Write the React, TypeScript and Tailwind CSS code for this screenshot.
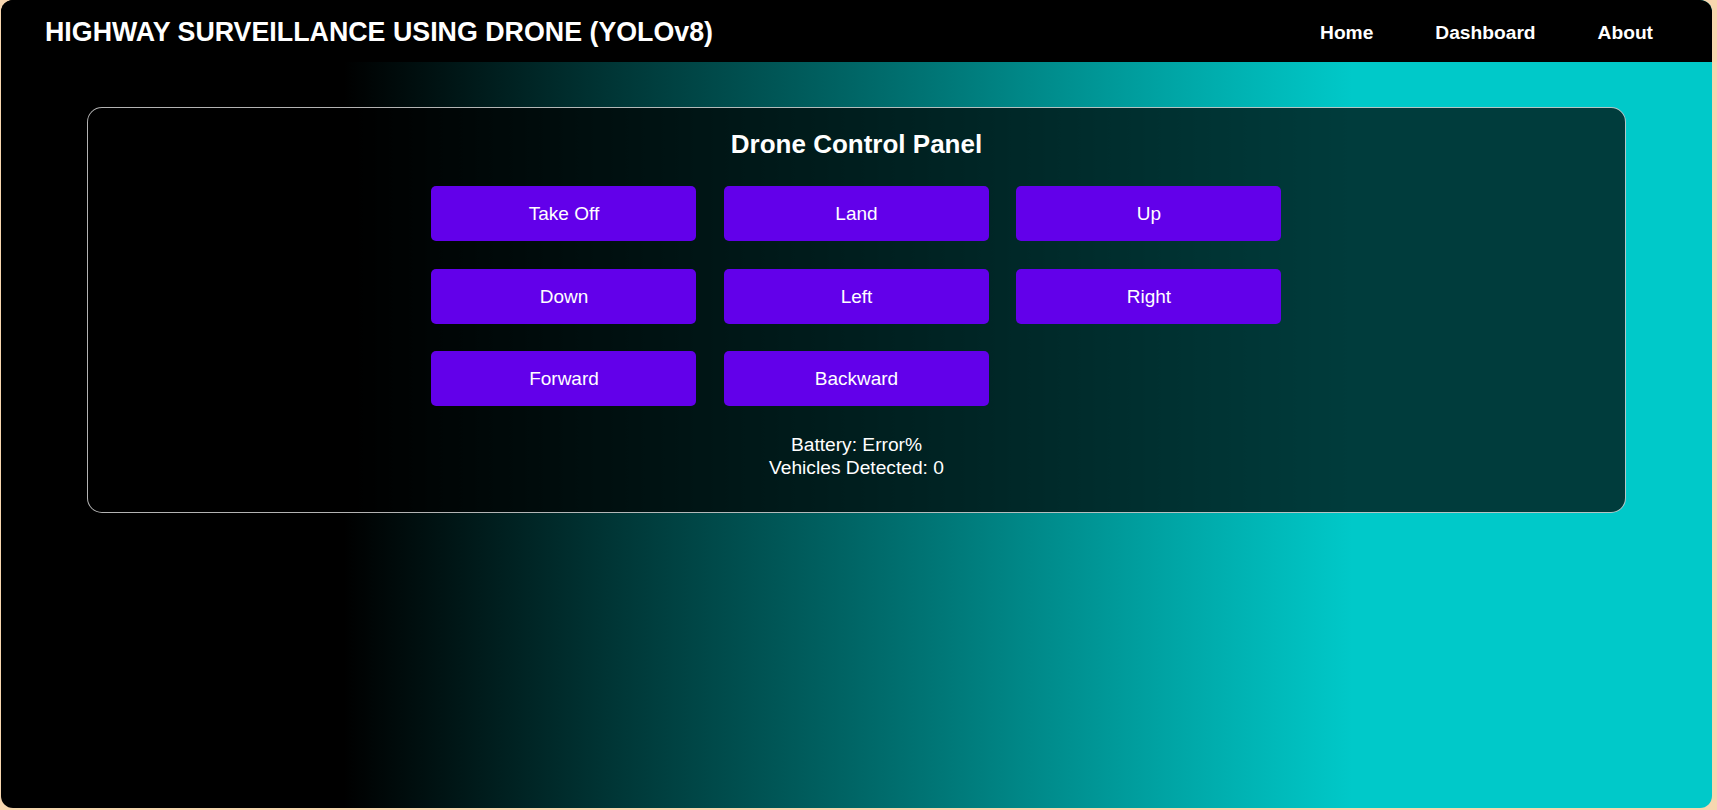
import React from "react";

const buttons = ["Take Off", "Land", "Up", "Down", "Left", "Right", "Forward", "Backward"];

export default function App() {
  return (
    <div className="w-full h-[810px] bg-[#f7d6af] overflow-hidden" style={{ fontFamily: '"Liberation Sans", Arial, sans-serif' }}>
      <div className="ml-[1px] mr-[5px] h-[808px] rounded-[12px] overflow-hidden flex flex-col bg-[linear-gradient(to_right,#000_20%,#00c9c9_79%)]">
        <header className="h-[62px] bg-black flex items-center justify-between pl-[44px] pr-[59px] shrink-0">
          <h1 className="text-[26.8px] font-bold text-white leading-none pt-[2px]">HIGHWAY SURVEILLANCE USING DRONE (YOLOv8)</h1>
          <nav className="flex gap-[62px] pt-[5px]">
            <a className="text-[19.2px] font-bold text-white">Home</a>
            <a className="text-[19.2px] font-bold text-white">Dashboard</a>
            <a className="text-[19.2px] font-bold text-white">About</a>
          </nav>
        </header>
        <section className="mt-[45px] mx-auto w-[90%] rounded-[15px] border border-white/70 bg-black/70 pt-[22px] pb-[33px] flex flex-col items-center">
          <h2 className="text-[26px] font-bold text-white leading-[29px]">Drone Control Panel</h2>
          <div className="mt-[27px] grid grid-cols-[265px_265px_265px] gap-x-[27.5px] gap-y-[27.5px]">
            {buttons.map((b) => (
              <button key={b} className="h-[55px] rounded-[5px] bg-[#6200ea] text-white text-[19px] pt-[2px]">
                {b}
              </button>
            ))}
          </div>
          <div className="mt-[27px] text-white text-[19.2px] leading-[23px] text-center">
            <p>Battery: Error%</p>
            <p>Vehicles Detected: 0</p>
          </div>
        </section>
      </div>
    </div>
  );
}
